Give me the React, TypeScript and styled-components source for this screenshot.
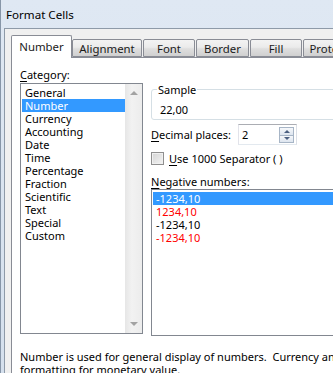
import styled, { createGlobalStyle } from 'styled-components'

const GlobalStyle = createGlobalStyle`
  html, body {
    margin: 0;
    padding: 0;
    background: #ffffff;
  }
  body {
    font-family: 'Noto Sans', 'Open Sans', sans-serif;
    font-size: 11px;
    color: #000000;
  }
`

const Viewport = styled.div`
  width: 333px;
  height: 373px;
  overflow: hidden;
`

const Window = styled.div`
  width: 460px;
  height: 373px;
  display: flex;
  flex-direction: column;
  background: linear-gradient(#dfe8f3, #d5e0ed);
  border-left: 1px solid #8796a8;
  box-sizing: border-box;
`

const TitleBar = styled.div`
  height: 28px;
  flex: none;
  display: flex;
  align-items: center;
  padding-left: 5px;
  font-size: 11.6px;
  color: #000;
`

const Body = styled.div`
  flex: 1;
  margin-left: 3px;
  border-left: 1px solid #8e9aa8;
  border-top: 1px solid #8e9aa8;
  background: #f0f0f0;
  padding: 6px 0 0 6px;
  display: flex;
  flex-direction: column;
`

const TabRow = styled.div`
  height: 23px;
  display: flex;
  align-items: flex-start;
  margin-bottom: -1px;
  position: relative;
  z-index: 1;
`

const Tab = styled.div<{ $w: number; $gap: number; $active?: boolean }>`
  width: ${(p) => p.$w}px;
  margin-left: ${(p) => p.$gap}px;
  box-sizing: border-box;
  flex: none;
  display: flex;
  align-items: center;
  justify-content: center;
  border: 1px solid #898c95;
  border-radius: 2px 2px 0 0;
  color: #1b1b1b;
  font-size: 11.4px;
  white-space: nowrap;
  overflow: hidden;
  ${(p) =>
    p.$active
      ? `
    height: 23px;
    margin-top: 0;
    border-bottom: none;
    background: #ffffff;
    padding-bottom: 2px;
  `
      : `
    height: 18px;
    margin-top: 4px;
    background: linear-gradient(#f3f3f3 0%, #ebebeb 45%, #dedede 55%, #d0d0d0 100%);
  `}
`

const Panel = styled.div`
  flex: 1;
  background: #ffffff;
  border: 1px solid #898c95;
  padding: 9px 0 0 8px;
`

const Columns = styled.div`
  display: grid;
  grid-template-columns: 123px 300px;
  column-gap: 8px;
`

const Column = styled.div`
  display: flex;
  flex-direction: column;
`

const Label = styled.div<{ $w?: number; $mt?: number }>`
  line-height: 15px;
  height: 15px;
  white-space: nowrap;
  ${(p) => (p.$w ? `width: ${p.$w}px; flex: none;` : '')}
  margin-top: ${(p) => p.$mt ?? 0}px;

  u {
    text-decoration: underline;
    text-underline-offset: 2px;
  }
`

const ListBox = styled.div<{ $h: number; $mt?: number }>`
  height: ${(p) => p.$h}px;
  margin-top: ${(p) => p.$mt ?? 0}px;
  box-sizing: border-box;
  border: 1px solid #828790;
  background: #ffffff;
  display: flex;
`

const Items = styled.div`
  flex: 1;
  padding: 2px 0 0 1px;
`

const Item = styled.div<{ $selected?: boolean; $red?: boolean }>`
  height: 13px;
  line-height: 13px;
  padding-left: 3px;
  white-space: nowrap;
  background: ${(p) => (p.$selected ? '#3399ff' : 'transparent')};
  color: ${(p) => (p.$selected ? '#ffffff' : p.$red ? '#ff0000' : '#000000')};
`

const ScrollBar = styled.div`
  width: 17px;
  flex: none;
  background: linear-gradient(90deg, #e6e6e6, #f2f2f2 40%, #ececec);
  display: flex;
  flex-direction: column;
  justify-content: space-between;
  align-items: center;
  padding: 7px 0 7px;
  box-sizing: border-box;
`

const Arrow = styled.div<{ $down?: boolean }>`
  width: 0;
  height: 0;
  border-left: 4px solid transparent;
  border-right: 4px solid transparent;
  ${(p) => (p.$down ? 'border-top: 4px solid #a3a3a3;' : 'border-bottom: 4px solid #a3a3a3;')}
`

const SampleGroup = styled.fieldset`
  margin: 15px 0 0 0;
  padding: 5px 0 1px 8px;
  height: 38px;
  box-sizing: border-box;
  border: 1px solid #d5dfe5;
  border-radius: 3px;
  min-width: 0;

  legend {
    margin-left: -3px;
    padding: 0 1px;
    line-height: 15px;
  }
`

const SampleValue = styled.div`
  line-height: 15px;
`

const Row = styled.div<{ $mt: number }>`
  display: flex;
  align-items: center;
  margin-top: ${(p) => p.$mt}px;
`

const SpinBox = styled.div`
  width: 59px;
  height: 21px;
  box-sizing: border-box;
  border: 1px solid #abadb3;
  border-left-color: #e2e3ea;
  border-right-color: #dbdfe6;
  border-bottom-color: #e3e9ef;
  display: flex;
  align-items: flex-start;
`

const SpinValue = styled.div`
  flex: 1;
  line-height: 19px;
  padding-left: 3px;
`

const Spinner = styled.div`
  width: 15px;
  height: 16px;
  margin: 2px 2px 0 0;
  display: flex;
  flex-direction: column;
`

const SpinButton = styled.div<{ $down?: boolean }>`
  flex: 1;
  box-sizing: border-box;
  border: 1px solid #a7b5c6;
  ${(p) => (p.$down ? 'border-top: none;' : '')}
  background: linear-gradient(#f6f8fb, #dde5ef);
  display: flex;
  align-items: center;
  justify-content: center;
`

const SpinArrow = styled.div<{ $down?: boolean }>`
  width: 0;
  height: 0;
  border-left: 3px solid transparent;
  border-right: 3px solid transparent;
  ${(p) => (p.$down ? 'border-top: 3px solid #4a5f80;' : 'border-bottom: 3px solid #4a5f80;')}
`

const CheckBox = styled.div`
  width: 13px;
  height: 13px;
  box-sizing: border-box;
  border: 1px solid #8f8f8f;
  background: linear-gradient(135deg, #d4d4d4, #f4f4f4);
  box-shadow: inset 0 0 0 1px #f0f0f0;
  margin-right: 5px;
  flex: none;
`

const Description = styled.div`
  margin-top: 14px;
  line-height: 13px;
  white-space: pre;
`

const categories = [
  'General',
  'Number',
  'Currency',
  'Accounting',
  'Date',
  'Time',
  'Percentage',
  'Fraction',
  'Scientific',
  'Text',
  'Special',
  'Custom',
]

const negatives = [
  { text: '-1234,10', selected: true },
  { text: '1234,10', red: true },
  { text: '-1234,10' },
  { text: '-1234,10', red: true },
]

const tabs = [
  { label: 'Number', w: 61, gap: 0, active: true },
  { label: 'Alignment', w: 70, gap: 0 },
  { label: 'Font', w: 52, gap: 1 },
  { label: 'Border', w: 53, gap: 1 },
  { label: 'Fill', w: 52, gap: 1 },
  { label: 'Protection', w: 68, gap: 1 },
]

export default function App() {
  return (
    <Viewport>
      <GlobalStyle />
      <Window>
        <TitleBar>Format Cells</TitleBar>
        <Body>
          <TabRow>
            {tabs.map((t) => (
              <Tab key={t.label} $w={t.w} $gap={t.gap} $active={t.active}>
                {t.label}
              </Tab>
            ))}
          </TabRow>
          <Panel>
            <Columns>
              <Column>
                <Label>
                  <u>C</u>ategory:
                </Label>
                <ListBox $h={251} $mt={1}>
                  <Items>
                    {categories.map((c) => (
                      <Item key={c} $selected={c === 'Number'}>
                        {c}
                      </Item>
                    ))}
                  </Items>
                  <ScrollBar>
                    <Arrow />
                    <Arrow $down />
                  </ScrollBar>
                </ListBox>
              </Column>
              <Column>
                <SampleGroup>
                  <legend>Sample</legend>
                  <SampleValue>22,00</SampleValue>
                </SampleGroup>
                <Row $mt={4}>
                  <Label $w={87}>
                    <u>D</u>ecimal places:
                  </Label>
                  <SpinBox>
                    <SpinValue>2</SpinValue>
                    <Spinner>
                      <SpinButton>
                        <SpinArrow />
                      </SpinButton>
                      <SpinButton $down>
                        <SpinArrow $down />
                      </SpinButton>
                    </Spinner>
                  </SpinBox>
                </Row>
                <Row $mt={6}>
                  <CheckBox />
                  <Label>
                    <u>U</u>se 1000 Separator ( )
                  </Label>
                </Row>
                <Label $mt={8}>
                  <u>N</u>egative numbers:
                </Label>
                <ListBox $h={147}>
                  <Items>
                    {negatives.map((n, i) => (
                      <Item key={i} $selected={n.selected} $red={n.red}>
                        {n.text}
                      </Item>
                    ))}
                  </Items>
                </ListBox>
              </Column>
            </Columns>
            <Description>
              {'Number is used for general display of numbers.  Currency and Accounting offer specialized\nformatting for monetary value.'}
            </Description>
          </Panel>
        </Body>
      </Window>
    </Viewport>
  )
}
